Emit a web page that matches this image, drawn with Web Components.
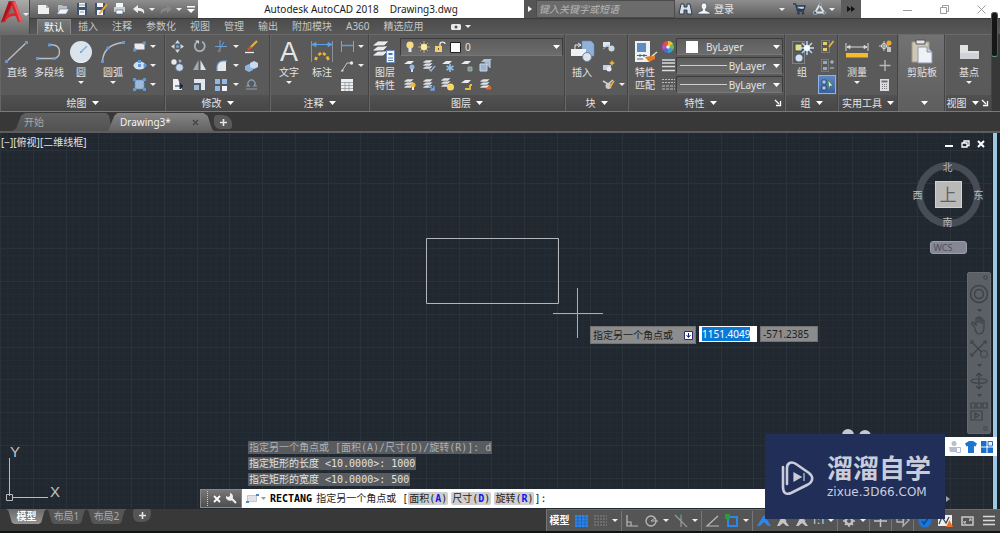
<!DOCTYPE html>
<html lang="zh-CN">
<head>
<meta charset="utf-8">
<title>Autodesk AutoCAD 2018 Drawing3.dwg</title>
<style>
html,body{margin:0;height:100%}
body{background:#0c1416;color:#e4e4e4;font:10px/13px "Noto Sans","Noto Sans CJK SC",sans-serif}
</style>
</head>
<body>
<cad-app></cad-app>
<script>
/* name: [width, height, svg markup] */
const pt=(x,y)=>`<rect x="${x-1.5}" y="${y-1.5}" width="3" height="3" fill="#5f9ad6"/>`;
const stack=(x,y,c='#dfe3e8')=>[6,3,0].map(d=>`<path d="M${x} ${y+d+2}l3-2h7l-3 3h-7z" fill="${c}" stroke="#555" stroke-width=".5"/>`).join('');
const ICONS={
caret:[7,4,'<path d="M0 0h7L3.500 4z" fill="#fff"/>'],
caretS:[6,3,'<path d="M0 0h6L3 3z" fill="#eee"/>'],
right:[4,6,'<path d="M0 0v6l4-3z" fill="#fff"/>'],
launch:[6,6,'<path d="M0 0l4 4M5.500 1v4.500H1" stroke="#fff" stroke-width="1.300" fill="none"/>'],
logo:[22,22,'<path d="M8 0h6l7.500 20-4.500 1-2-5.500c-3-1-6 0-9 2.500L4 21l-4 .5z" fill="#d9252b"/><path d="M10.800 5l3 7.500c-2.500-.5-4.500.3-6.200 1.200z" fill="#777"/><path d="M8 0l-8 21.500 3-2L11 2z" fill="#a3161c"/><path d="M14 0l7.500 20-2.500.500L12 1z" fill="#f0575b"/>'],
neu:[13,11,'<path d="M1 1h8l3 3v6H1z" fill="#eef0f2"/><path d="M9 1v3h3" fill="#a8adb3"/>'],
open:[13,11,'<path d="M2 1h4l1 1h4v3H4L2 9z" fill="#b7bec7"/><path d="M4 5h9l-3 5H1z" fill="#f1f3f6" stroke="#6d7f96" stroke-width=".6"/>'],
save:[12,12,'<path d="M1 0h10v12H1z" fill="#3d5370"/><path d="M3 0h6v4H3zM3 7h6v5H3z" fill="#f2f4f6"/><path d="M3 2h6M4 9h4" stroke="#8997a8"/>'],
saveas:[13,12,'<path d="M1 0h10v12H1z" fill="#3d5370"/><path d="M3 0h6v4H3zM3 7h6v5H3z" fill="#f2f4f6"/><path d="M12.500 1L6 9l-1 2 2-1 6-8z" fill="#f3a63b" stroke="#f3a63b" stroke-width=".8"/>'],
print:[13,12,'<path d="M3 0h7v4H3z" fill="#f4f6f8"/><path d="M1 4h11v5H1z" fill="#c9d0d8"/><path d="M3 7h7v4H3z" fill="#fff" stroke="#4e6078" stroke-width=".7"/>'],
undo:[12,9,'<path d="M0 4l5-4v3c5-.2 7 2 6 6C10 6.500 8 5.600 5 5.700V8z" fill="#eceef0"/>'],
redo:[12,9,'<path d="M12 4L7 0v3C2 2.800 0 5 1 9c1-2.500 3-3.400 6-3.300V8z" fill="#85888b"/>'],
menu:[8,7,'<path d="M0 0h8v1.500H0zM0 3h8L4 7z" fill="#fff"/>'],
bino:[13,12,'<path d="M2 1h3v3h3V1h3l2 10H8V7H5v4H0z" fill="#d9e2ec" stroke="#2d3b50" stroke-width="1"/>'],
user:[12,12,'<path d="M6 0c2 0 3 1.500 2.700 3.500C8.500 5 8 5.500 7.500 6v1.500L12 9.500V11H0V9.500l4.500-2V6C4 5.500 3.500 5 3.300 3.500 3 1.500 4 0 6 0z" fill="#f2f5f8" stroke="#3d4a5c" stroke-width=".6"/>'],
cart:[13,12,'<path d="M0 1h2.500l2 7H11M3.500 3H12L11 6.500H4.500" fill="#cfd8e3" stroke="#2a3b55" stroke-width="1.400"/><circle cx="5.500" cy="10.300" r="1.300" fill="#2a3b55"/><circle cx="10" cy="10.300" r="1.300" fill="#2a3b55"/>'],
tri:[13,12,'<path d="M6.500 2L2 9.500h9z" fill="none" stroke="#dfe7ef" stroke-width="1.800"/><path d="M6.500 0a1.800 1.800 0 010 3.600M0 9l3-1 1 3-3 .5zM10 8l3 1.500-2 2z" fill="#3f5b7f" stroke="#dfe7ef" stroke-width=".5"/>'],
more:[8,6,'<path d="M0 0l4 3-4 3zM4 0l4 3-4 3z" fill="#111"/>'],
min:[9,9,'<path d="M0 5.500h9" stroke="#9b9b9b"/>'],
rest:[9,9,'<path d="M.5 2.500h6v6h-6zM2.500 2.500v-2h6v6h-2" fill="none" stroke="#9b9b9b"/>'],
close:[9,9,'<path d="M.5.500l8 8M8.500.500l-8 8" stroke="#9b9b9b"/>'],
camera:[10,6,'<rect width="10" height="6" rx="1.500" fill="#e8e8e8"/><circle cx="5" cy="3" r="1.500" fill="#555"/>'],
line:[26,24,'<path d="M2.500 21.500l20-19" stroke="#b9bec3" stroke-width="1.400"/>'+pt(2.5,21.5)+pt(22.5,2.5)],
pline:[26,24,'<path d="M1.500 18.500H18c8-2 7-13-1-13.500l-3-.500" stroke="#b9bec3" stroke-width="1.400" fill="none"/>'+pt(1.5,18.5)+pt(18,18.5)+pt(13.500,5)],
circle:[26,24,'<circle cx="13" cy="12" r="11" fill="#dbe3ed"/><path d="M4 18a11 11 0 0018 0 12 12 0 01-18 0z" fill="#fff"/><path d="M13 12l6-6" stroke="#7fa9d8" stroke-width="1.300"/><rect x="12" y="11" width="2" height="2" fill="#7fa9d8"/>'],
arc:[26,24,'<path d="M2.500 21.500C3 10 10 4 23.500 2.500" stroke="#b9bec3" stroke-width="1.400" fill="none"/>'+pt(2.5,21.5)+pt(8,8)+pt(23.5,2.5)],
rect:[13,11,'<path d="M1.500 2.500h10v6h-10z" fill="#e9ebee"/>'+pt(1.8,9)+pt(11.3,2)],
ellipse:[13,11,'<ellipse cx="6.500" cy="5.500" rx="6" ry="4" fill="#d4dfec"/>'+pt(6.5,5.5)+pt(6.5,1.5)+pt(12,5.5)],
hatch:[13,13,'<path d="M2 2h9v9H2z" fill="#9db8d8" stroke="#5f8fc6" stroke-dasharray="2 1"/>'+pt(1.5,1.5)+pt(11.5,1.5)+pt(1.5,11.5)+pt(11.5,11.5)],
move:[13,13,'<path d="M6.500 0l2.500 3.500H4zM6.500 13L4 9.500h5zM0 6.500L3.500 4v5zM13 6.500L9.500 9V4z" fill="#cdd8e5"/><circle cx="6.500" cy="6.500" r="1.600" fill="#6aa0dc"/>'],
rotate:[13,13,'<path d="M4 2a5 5 0 105-.3" stroke="#a9afb6" stroke-width="1.800" fill="none"/><path d="M2 .500h4v3.500z" fill="#cdd3da"/>'],
trim:[13,13,'<path d="M0 6.500h12M5 0v6M3 12L9 2" stroke="#6d9fd4" fill="none"/><path d="M5 7v5" stroke="#888"/>'],
erase:[14,14,'<path d="M13 1L6 8" stroke="#e8b23c" stroke-width="2.200"/><path d="M7 7L4 10" stroke="#d54d34" stroke-width="2.600"/><path d="M1 12.500h9" stroke="#eee" stroke-width="1.300"/>'],
copy:[13,13,'<circle cx="3" cy="3" r="2.700" fill="#e5e9ee"/><circle cx="8.500" cy="8.500" r="3.800" fill="#c8d6e6" stroke="#48688f" stroke-width=".6"/><circle cx="9" cy="2" r="1.500" fill="#8fb3dc"/>'],
mirror:[13,13,'<path d="M5.500 1v10H0z" fill="#a3a9b0"/><path d="M7.500 1v10H13z" fill="#d8e2ee"/>'],
fillet:[13,13,'<path d="M2 12V8a6 6 0 016-6h3v10z" fill="#e3e8ee"/><path d="M2 12V8a6 6 0 016-6h4" stroke="#6e9fd3" stroke-width="1.200" fill="none"/>'],
solid:[14,12,'<path d="M1 6l4-2 4 2v4l-4 2-4-2z" fill="#8db4e0"/><path d="M6 3l4-2 4 2v4l-4 2-4-2z" fill="#c6daf0"/>'],
stretch:[13,13,'<path d="M2 1h5l4 11H2z" fill="#eef1f5"/><path d="M4 8h5M9 5l3 3-3 3z" stroke="#1c2c42" fill="#1c2c42"/>'],
scale:[13,13,'<path d="M1 1h11v11H8V5H1z" fill="#dfe7f0"/><path d="M1 7h5v5H1z" fill="#9bbce2"/>'],
array:[13,13,'<path d="M0 1h5v5H0zM7 1h5v5H7zM0 8h5v5H0z" fill="#8fb8e8"/><path d="M7 8h5v5H7z" fill="#eef3f9"/>'],
offset:[13,11,'<path d="M1 10h11M1 7h3a3.500 3.500 0 115 0h3" stroke="#8fa3ba" stroke-width="1.200" fill="none"/>'],
text:[26,26,'<text x="13" y="22" text-anchor="middle" font-family="Liberation Sans,sans-serif" font-size="27" fill="#e3e5e8">A</text>'],
dim:[24,24,'<path d="M1.500 1v21M22.500 1v21" stroke="#8d9299"/><path d="M2 4.500h20M2 4.500l4-2v4zM22 4.500l-4-2v4z" stroke="#5aa0e6" fill="#5aa0e6"/><path d="M5.500 20l1-3M8.500 15l2.500-2M13 13l2.500 2M17 16.500l1.500 3.500" stroke="#efb52e" stroke-width="2.800" fill="none"/>'],
dimS:[13,11,'<path d="M.5 0v11M12.500 0v11" stroke="#9a9fa6"/><path d="M1 4.500h11" stroke="#5aa0e6" stroke-width="1.400"/>'],
leader:[13,12,'<path d="M1 11L6 3h3" stroke="#c1c6cc" fill="none"/><circle cx="10.500" cy="3" r="1.700" fill="#e4e7eb"/><path d="M0 12l3-1-2-2z" fill="#ddd"/>'],
table:[12,12,'<path d="M0 0h12v12H0z" fill="#eceef0"/><path d="M0 3.500h12M0 6.500h12M0 9.500h12M4 3v9M8 3v9" stroke="#9199a2" stroke-width=".8"/>'],
layers:[26,24,'<path d="M1 15l5-4h10l-5 5H1zM1 10l5-4h10l-5 5H1zM1 5l5-4h11l-5 5H1z" fill="#e8eaed" stroke="#4d4d4d" stroke-width=".7"/><path d="M14.500 10.500h8v12h-8z" fill="#f3f6fa" stroke="#6d8db5"/><path d="M16.500 13h4v2h-4z" fill="#3f79bf"/><path d="M16 18h5M16 20.500h5" stroke="#69809c"/>'],
bulb:[8,12,'<circle cx="4" cy="4" r="3.600" fill="#f7dc84"/><path d="M2.500 7h3v4h-3z" fill="#e3e4e6"/>'],
sun:[12,12,'<path d="M6 0v12M0 6h12M2 2l8 8M10 2l-8 8" stroke="#d8b968" stroke-width=".8"/><circle cx="6" cy="6" r="3.200" fill="#fbeba6"/>'],
lock:[12,12,'<path d="M6 5V3c0-2.500 5-2.500 5 0" stroke="#eee" fill="none" stroke-width="1.300"/><path d="M1 5h7v6H1z" fill="#f2cf6b"/><path d="M4 7h1v2H4z" fill="#555"/>'],
white:[11,11,'<path d="M.5.500h10v10H.5z" fill="#fff" stroke="#222"/>'],
swatch:[12,12,'<path d="M0 0h12v12H0z" fill="#fff"/>'],
l1:[13,12,'<path d="M1 4l4-3h6L8 4z" fill="#e8eaed"/><circle cx="9" cy="7" r="2.500" fill="#8fb8ea"/><path d="M8 9h2v3H8z" fill="#ddd"/>'],
l2:[13,13,stack(1,1)+'<path d="M7 10l2 2 4-5" stroke="#8bb4e4" fill="none" stroke-width="1.500"/>'],
l3:[13,12,'<path d="M1 4l4-3h6L8 4z" fill="#e8eaed"/><path d="M9 4v8M5.500 6l7 4M12.500 6l-7 4" stroke="#8fbdf0" stroke-width="1.600"/>'],
l4:[13,12,'<path d="M1 4l4-3h6L8 4z" fill="#e8eaed"/><path d="M8 7h4v4H8z" fill="#7f969c" stroke="#a8c9b3" stroke-width=".7"/>'],
l5:[13,13,'<path d="M1 5h7v7H1zM4 2h7v7" fill="#9fb4cc" stroke="#c5d8ec"/><path d="M2 3l3-3h8l-3 3z" fill="#a9c4e0"/>'],
l6:[13,13,stack(1,1)+'<circle cx="10" cy="7" r="2.500" fill="#f2bb3b"/><path d="M9 9h2v3H9z" fill="#eee"/>'],
l7:[13,13,stack(1,1)+'<path d="M7 8l5 4M12 8v4H8" stroke="#6fa2e0" fill="none" stroke-width="1.500"/>'],
l8:[13,13,stack(0,0)+'<circle cx="9.500" cy="9" r="3.500" fill="#f6d766"/>'],
l9:[13,12,'<path d="M1 4l4-3h6L8 4z" fill="#e8eaed"/><path d="M10 6v4H5M10 6h2" stroke="#eebd37" stroke-width="1.800" fill="none"/>'],
l10:[13,13,stack(1,1)+'<path d="M7 11l4-3 1 3z" fill="#e06a2e" stroke="#e06a2e"/>'],
insert:[25,24,'<path d="M12 1h9l3 3v12H12z" fill="#8fb1da" stroke="#6d8db5" stroke-width=".6"/><path d="M5 10V5h6M8 3l3 2-3 2" stroke="#e7e9ec" fill="none"/><path d="M1 9h15v7H1z" fill="#edf0f4"/><circle cx="17" cy="17" r="4.500" fill="#dbe3ec" stroke="#6e7f94"/>'],
b1:[13,11,'<path d="M1 1h7v5H1z" fill="#e1e6ec"/><path d="M1 8l4-3h3" stroke="#8fb1da" fill="none"/><circle cx="9.500" cy="7.500" r="3" fill="#cfd5dc"/>'],
b2:[13,12,'<path d="M1 5h8v5H1z" fill="#c1cfdf"/><circle cx="7" cy="9" r="2.500" fill="#e7ebf0"/><path d="M10 0l1 2 2 1-2 1-1 2-1-2-2-1 2-1z" fill="#f4b135"/>'],
b3:[13,11,'<path d="M1 2l5 3 5-4" stroke="#ccc" stroke-width="1.600" fill="none"/><circle cx="6.500" cy="7" r="3" fill="#c7ccd2"/><path d="M12 2L8 8" stroke="#e8a530" stroke-width="1.800"/>'],
match:[25,24,'<path d="M2 1h15v21H2z" fill="#eff2f5"/><path d="M4 3h9v9H4z" fill="#5b8dc4"/><path d="M4 15.500h10M4 19h6M7 14v3M11 14v3" stroke="#53657c"/><path d="M22 14l-4 2-6 1 4 5 6-3z" fill="#df7a27"/><path d="M19 16l5-4" stroke="#ddd" stroke-width="1.500"/>'],
wheel:[12,12,'<path d="M6 6V0a6 6 0 015.200 3z" fill="#f2c232"/><path d="M6 6l5.200-3a6 6 0 010 6z" fill="#6cc04a"/><path d="M6 6l5.200 3A6 6 0 016 12z" fill="#35a0d8"/><path d="M6 6v6a6 6 0 01-5.200-3z" fill="#5a63d6"/><path d="M6 6L.8 9a6 6 0 010-6z" fill="#c04ac0"/><path d="M6 6L.8 3A6 6 0 016 0z" fill="#e64f3c"/><circle cx="6" cy="6" r="1.800" fill="#eee"/>'],
lw:[13,13,'<path d="M0 1h13M0 4h13M0 7.500h13M0 11.500h13" stroke="#d9dcdf" stroke-width="1.600"/>'],
lt:[13,13,'<path d="M0 1.500h13M0 4.500h13" stroke="#b9bcc0" stroke-dasharray="2 1"/><path d="M0 8h13M0 11h13" stroke="#b9bcc0" stroke-dasharray="3 1"/>'],
group:[25,24,'<path d="M2.500 1.500h12v22h-12z" fill="none" stroke="#aaa" stroke-dasharray="1 1"/><path d="M5 4h7v7H5z" fill="#dfe08a" stroke="#444"/><circle cx="9" cy="18" r="3.500" fill="#cfe4f8"/><path d="M17 1v14M10 8h14M12 3l10 10M22 3L12 13" stroke="#b9e0ff" stroke-width="1.400"/><circle cx="17" cy="8" r="3" fill="#fff"/>'],
g1:[13,13,'<path d="M.5.500h8v12h-8z" fill="none" stroke="#999" stroke-dasharray="1 1"/><path d="M2 2h4v3H2zM2 8h4v3H2z" fill="#e3cf6f"/><path d="M12.500 1L8 7" stroke="#f0b53a" stroke-width="1.500"/>'],
g2:[13,13,'<path d="M.5.500h7v12h-7z" fill="none" stroke="#999" stroke-dasharray="1 1"/><path d="M2 2h4v3H2zM2 8h4v3H2z" fill="#93a9c4"/><path d="M9 3h4M11 1v4M9 9h4" stroke="#b8c6d8"/>'],
g3:[13,13,'<path d="M1 2h4v4H1zM1 8h4v4H1z" fill="#a9c8ee" stroke="#1d3252" stroke-width=".7"/><path d="M7 2l5 6H9l-1 4z" fill="#d9efc8" stroke="#3d6b3b" stroke-width=".6"/>'],
measure:[24,20,'<path d="M1 1v8M23 1v8M2 5h20M2 5l3-1.500v3zM22 5l-3-1.500v3z" stroke="#d5d7da" fill="#d5d7da"/><path d="M1 11h22v4.500H1z" fill="#f3bb2d"/>'],
u1:[13,13,'<path d="M5 1v10M0 6h10" stroke="#ccc"/><circle cx="5" cy="6" r="2.500" fill="none" stroke="#ddd"/><circle cx="10" cy="3" r="2.500" fill="#efa62c"/><path d="M8 7h4v5H8z" fill="#bfc3c8"/>'],
u2:[13,13,'<path d="M6 1v11M.5 6.500h11" stroke="#b4b8bd" stroke-width="1.400"/>'],
calc:[10,12,'<path d="M0 0h9v12H0z" fill="#dadcdf"/><path d="M1.500 1.500h6v2h-6z" fill="#6d7278"/><path d="M2 5.500h6M2 7.500h6M2 9.500h6" stroke="#777" stroke-dasharray="1 1"/>'],
paste:[22,25,'<path d="M1 3h17v20H1z" fill="#cfc6b8" stroke="#a39a8b"/><path d="M5 1h9v4H5z" fill="#e8e8e8" stroke="#555"/><path d="M7 8h9l5 5v11H7z" fill="#eef2f7" stroke="#8e99a8"/><path d="M16 8v5h5" fill="#c2ccd8" stroke="#8e99a8"/>'],
base:[21,16,'<path d="M1 1h8v6h11v8H1z" fill="#e0e2e4"/><path d="M1 9h19v6H1z" fill="#d0d2d5"/>'],
vmin:[9,8,'<path d="M0 6h8" stroke="#fff" stroke-width="2"/>'],
vrest:[9,8,'<path d="M1 3h5v4H1zM3 3V1h5v4.500H6" fill="none" stroke="#fff" stroke-width="1.300"/>'],
vclose:[8,8,'<path d="M1 1l6 6M7 1L1 7" stroke="#fff" stroke-width="2"/>'],
tabx:[7,7,'<path d="M1 1l5 5M6 1L1 6" stroke="#444" stroke-width="1.200"/>'],
plus:[7,7,'<path d="M3.500 0v7M0 3.500h7" stroke="#e6e6e6" stroke-width="1.600"/>'],
downbox:[9,9,'<path d="M.5.500h8v8h-8z" fill="#fff" stroke="#2a2a7d"/><path d="M4.500 2v4M2.500 4l2 2.500 2-2.500" stroke="#22226e" fill="none"/>'],
grip:[3,15,'<path d="M1.500 0v15" stroke="#ccc" stroke-dasharray="1 1"/>'],
cx:[8,8,'<path d="M1 1l6 6M7 1L1 7" stroke="#fff" stroke-width="1.800"/>'],
wrench:[11,11,'<path d="M1 4a3 3 0 005 2l4 4" stroke="#eee" stroke-width="2" fill="none"/><path d="M4 0v3L2 4 0 3a3.500 3.500 0 007 1 4 4 0 00-3-4z" fill="#eee"/>'],
crect:[13,11,'<path d="M1.500 2.500h9v6h-9z" fill="#dfe2e6" stroke="#c3c7cc"/><path d="M0 8h3v2H0zM10 1h3v2h-3z" fill="#4f83c9"/>'],
dcaret:[5,3,'<path d="M0 0h5L2.500 3z" fill="#999"/>'],
histup:[4,6,'<path d="M0 0v6l4-3z" fill="#9aa0a5"/>'],
/* navigation bar */
nwheel:[20,20,'<circle cx="10" cy="10" r="8.500" fill="none" stroke="#3c4247" stroke-width="1.400"/><circle cx="10" cy="10" r="4.500" fill="none" stroke="#3c4247" stroke-width="1.400"/>'],
nhand:[18,19,'<path d="M5 12L2 8c-1-2 1-2.500 2-1l2 2V3c0-1.500 2-1.500 2 0v4-5c0-1.500 2-1.500 2 0v5-4c0-1.500 2-1.500 2 0v5-3c0-1.500 2-1.500 2 0v6c0 5-2 7-5 7-2 0-3-2-4-5z" fill="none" stroke="#3c4247" stroke-width="1.200"/>'],
nzoom:[19,20,'<path d="M2 2l13 14M15 2L2 15M1 4V1h3M13 1h3v3M1 13v3h3" stroke="#3c4247" stroke-width="1.200" fill="none"/><circle cx="14" cy="14" r="3.500" fill="#5a6065" stroke="#3c4247"/>'],
norbit:[18,18,'<path d="M9 1v16M6 4l3-3 3 3M6 14l3 3 3-3M1 9c0-3 16-3 16 0s-16 3-16 0" stroke="#3c4247" stroke-width="1.200" fill="none"/>'],
nmotion:[19,20,'<path d="M1 1h4v5H1zM7 1h4v5H7zM13 1h4v5h-4zM1 9h11v9H1zM5 11v5l4-2.500z" stroke="#3c4247" stroke-width="1.200" fill="none"/>'],
ndot:[5,5,'<circle cx="2.500" cy="2.500" r="1.800" fill="none" stroke="#3c4247"/>'],
ncaret:[5,3,'<path d="M0 0h5L2.500 3z" fill="#3c4247"/>'],
/* input-method bar */
person:[12,12,'<circle cx="5" cy="2.500" r="2.500" fill="#b5bdd0"/><path d="M0 6h8v5H1z" fill="#b5bdd0"/><path d="M7.500 6.500h4v5h-4z" fill="#fff" stroke="#b5bdd0"/>'],
shirt:[12,12,'<path d="M4 0h4l4 2.500-1.500 3-1.500-.5V12H3V5l-1.500.5L0 2.500z" fill="#1b76d0"/>'],
apps:[12,12,'<path d="M0 0h5.500v5.500H0zM0 6.500h5.500V12H0zM6.500 6.500H12V12H6.500z" fill="#1b6fc8"/><path d="M7 .500h4.500V5H7z" fill="#e8f0fa" stroke="#1b6fc8"/>'],
/* status bar */
sgrid:[13,12,'<path d="M0 0h13v12H0z" fill="#2f86ea"/><path d="M0 3h13M0 6h13M0 9h13M3 0v12M6.500 0v12M10 0v12" stroke="#1c5cae" stroke-width=".7"/>'],
ssnap:[13,12,'<path d="M0 1h13M0 4h13M0 7h13M0 10h13" stroke="#85888b" stroke-dasharray="2 1"/>'],
sortho:[13,12,'<path d="M1 0v11h11M1 7h4v4" stroke="#b9b9b9" fill="none" stroke-width="1.200"/>'],
spolar:[13,12,'<circle cx="6" cy="6" r="5" stroke="#b9b9b9" fill="none" stroke-width="1.300"/><path d="M6 6h7M6 6l4-3" stroke="#b9b9b9"/>'],
siso:[14,14,'<path d="M1 1l12 12M7 1v12" stroke="#999" stroke-width="1.200"/><path d="M7 0v4" stroke="#3b8d5a"/>'],
sang:[13,12,'<path d="M12 1L1 11h12" stroke="#b9b9b9" fill="none" stroke-width="1.200"/>'],
sosnap:[14,14,'<path d="M3 3h9v9H3z" fill="none" stroke="#2f86ea" stroke-width="2"/><path d="M0 0h5v5H0z" fill="#21a038"/>'],
sman:[14,12,'<path d="M7 0L0 11h3l4-4 4 4h3z" fill="#2f86ea"/>'],
sman2:[14,12,'<path d="M6 1L1 11h2.500L7 8l3.500 3H13z" fill="#c4c4c4"/><path d="M10 1l-2 4h2l-1 3" stroke="#c4c4c4" fill="none"/>'],
sgear:[12,12,'<circle cx="6" cy="6" r="3.500" stroke="#c4c4c4" stroke-width="2" fill="none"/><path d="M6 0v12M0 6h12M2 2l8 8M10 2l-8 8" stroke="#c4c4c4" stroke-width="1.500"/><circle cx="6" cy="6" r="2" fill="#555"/>'],
splus:[13,12,'<path d="M6.500 0v12M0 6h13" stroke="#c4c4c4" stroke-width="1.500"/>'],
siso2:[14,12,'<path d="M1 2h6v5H1zM8 1l5 4-6 6z" stroke="#b4b4b4" fill="none" stroke-width="1.300"/>'],
scirc:[14,14,'<circle cx="7" cy="7" r="6.500" fill="#1b77dd"/><path d="M4 7l2 3 4-6" stroke="#0d4b97" fill="none" stroke-width="1.600"/>'],
schart:[15,14,'<path d="M0 1h14v11H0z" fill="#eee"/><path d="M1 10l3-7 4 6 3-6" stroke="#444" fill="none" stroke-width="1.300"/><path d="M11.500 6l3.500 7H8z" fill="#e8702a"/>'],
sclean:[13,10,'<path d="M1 1h11v8H1z" fill="none" stroke="#c9c9c9" stroke-width="1.500"/><path d="M3 7l2-2M10 3L8 5M3 5v2h2M8 3h2v2" stroke="#c9c9c9" fill="none"/>'],
sburger:[12,11,'<path d="M0 1.500h12M0 5.500h12M0 9.500h12" stroke="#d9d9d9" stroke-width="1.700"/>'],
brand:[35,36,'<path d="M3 8v20c0 6 3 8 8 6l16-8c6-3 7-8 2-12L16 5C11 2 7 4 7 9v16" fill="none" stroke="#c9cddb" stroke-width="2.600" stroke-linecap="round"/><path d="M14 14v8l7-4zM24 14v8" fill="#c9cddb" stroke="#c9cddb" stroke-width="1.200"/>']
};

const BASE=`*{box-sizing:border-box}button{all:unset;box-sizing:border-box;cursor:default;display:inline-flex;align-items:center;justify-content:center}`;
function define(tag,css,html){
  customElements.define(tag,class extends HTMLElement{
    connectedCallback(){
      if(this.shadowRoot)return;
      const t=document.createElement('template');
      t.innerHTML=`<style>${BASE}${css}</style>${typeof html==='function'?html(this):html}`;
      this.attachShadow({mode:'open'}).append(t.content.cloneNode(true));
    }
  });
}
const ic=n=>`<cad-icon name="${n}"></cad-icon>`;
const btn=(n,label,cls='')=>`<button class="${cls}" aria-label="${label}">${ic(n)}</button>`;

define('cad-icon',':host{display:block;flex:none}svg{display:block;overflow:visible}',el=>{
  const [w,h,m]=ICONS[el.getAttribute('name')];
  return `<svg width="${w}" height="${h}" viewBox="0 0 ${w} ${h}" aria-hidden="true">${m}</svg>`;
});

/* large ribbon command: icon above its caption */
define('cad-tool',`:host{display:block;flex:none;width:32px}
button{width:100%;flex-direction:column;justify-content:flex-start}
.i{height:29px;display:flex;align-items:center}
.l{text-align:center;white-space:pre-line}
.c{height:7px;display:flex;align-items:center}`,
el=>`<button><span class="i">${ic(el.getAttribute('icon'))}</span><span class="l"><slot></slot></span>${el.hasAttribute('drop')?`<span class="c">${ic('caretS')}</span>`:''}</button>`);

/* small ribbon command, optionally with a drop-down arrow */
define('cad-mini',`:host{display:flex;height:19px}
button{width:100%;height:19px}
.m{width:var(--mini,20px);height:19px;flex:none}.d{width:8px;flex:none}
:host([active]) .m{background:linear-gradient(#5c86c4,#3c62a0);border:1px solid #8fb2e6}`,
el=>btn(el.getAttribute('icon'),el.getAttribute('label'),'m')+(el.hasAttribute('drop')?btn('caretS',el.getAttribute('label')+' 选项','d'):''));

define('cad-panel',`:host{display:flex;flex-direction:column;min-width:0;border:1px solid #454545;border-top-color:#6a6a6a;border-left-color:#666;border-bottom:0;background:#5a5a5a}
.b{flex:1;display:flex;padding-top:2px;min-height:60px}
.f{height:16px;display:flex;align-items:center;background:linear-gradient(#515151,#474747)}
.f .t{flex:1;gap:5px;height:16px}
:host([lit]){background:linear-gradient(#727272,#5e5e5e)}
:host([lit]) .f{background:none}
.x{width:12px;height:16px}`,
el=>`<div class="b"><slot></slot></div><div class="f"><button class="t" aria-label="${el.getAttribute('label')||'剪贴板'}"><span>${el.getAttribute('label')||''}</span>${ic('caret')}</button>${el.hasAttribute('launch')?btn('launch','设置','x'):''}</div>`);

define('cad-combo',`:host{display:flex;align-items:center;height:18px;position:relative;background:linear-gradient(#5d5d5d,#6c6c6c);border:1px solid #3c3c3c;border-bottom-color:#777;min-width:0}
select{all:unset;flex:1;min-width:0;box-sizing:border-box;font:inherit;line-height:16px;height:16px}
:host([right]) select{text-align:right;padding-right:16px}
option{color:#000}
.c{position:absolute;right:2px;top:6px;pointer-events:none}
.r{flex:1;height:1px;background:#cfcfcf;margin:0 1px 0 3px}
:host([right]) select{flex:none}`,
el=>`<slot></slot>${el.hasAttribute('right')?'<i class="r"></i>':''}<select aria-label="${el.getAttribute('label')}"><option>${el.getAttribute('value')}</option></select><span class="c">${ic('caret')}</span>`);

define('cad-titlebar',`:host{display:flex;height:18px;background:#fff;min-width:0}
.q,.s{display:flex;flex:none;background:linear-gradient(#8e8e8e,#5c5c5c);height:18px}
.q{padding-left:4px}
.k{width:19px}.c{width:8px}.n{width:15px}
h1{flex:1;margin:0;font:10px/18px "Noto Sans","Noto Sans CJK SC",sans-serif;color:#1c1c1c;display:flex;justify-content:center;gap:11px;white-space:nowrap;min-width:0}
.s{width:337px}.a{width:12px;background:#555}
input{width:139px;height:18px;border:1px solid #4c4c4c;background:#6b6b6b;color:#fff;padding:0 2px;font:italic 10px/13px "Noto Sans","Noto Sans CJK SC",sans-serif;outline:0;border-radius:0}
input::placeholder{color:#b5b5b5}
.b{width:20px}.u{gap:4px;padding-left:3px}
.g{flex:1}.v{width:12px}.w{width:22px}.y{width:18px}.m{width:20px;margin-left:5px;background:#5d5d5d}
.o{flex:none;display:flex;width:139px;justify-content:flex-end}.o button{width:37px}`,
`<div class="q">${btn('neu','新建','k')}${btn('open','打开','k')}${btn('save','保存','k')}${btn('saveas','另存为','k')}${btn('print','打印','k')}${btn('undo','放弃','k')}${btn('caretS','放弃列表','c')}${btn('redo','重做','k')}${btn('caretS','重做列表','c')}${btn('menu','自定义快速访问工具栏','n')}</div>
<h1><span>Autodesk AutoCAD 2018</span><span>Drawing3.dwg</span></h1>
<div class="s">${btn('right','展开搜索','a')}<input placeholder="键入关键字或短语" aria-label="搜索">${btn('bino','搜索帮助','b')}<button class="u">${ic('user')}登录</button><span class="g"></span>${btn('caretS','登录选项','v')}${btn('cart','应用商店','w')}${btn('tri','保持连接','y')}${btn('caretS','连接选项','c')}${btn('more','更多','m')}</div>
<div class="o">${btn('min','最小化')}${btn('rest','还原')}${btn('close','关闭')}</div>`);

define('cad-menubar',`:host{display:flex;height:16px;background:linear-gradient(#4c4c4c,#585858);padding-left:7px;border-top:1px solid #3c3c3c}
button{padding:0 7px;height:15px;color:#c6c6c6;line-height:15px}
.on{background:linear-gradient(#787878,#646464);color:#fff;border:1px solid #858585;border-bottom:0;padding:0 6px}
.cam{gap:4px;margin-left:13px}`,
['默认','插入','注释','参数化','视图','管理','输出','附加模块','A360','精选应用'].map((t,i)=>`<button${i?'':' class="on"'}>${t}</button>`).join('')+`<button class="cam" aria-label="显示选项">${ic('camera')}${ic('caretS')}</button>`);

const mini=(i,l,d='')=>`<cad-mini icon="${i}" label="${l}" ${d}></cad-mini>`;
define('cad-ribbon',`:host{display:grid;grid-template-columns:165fr 105fr 99fr 196fr 63fr 157fr 53fr 60fr 47fr 47fr 8fr;height:78px;background:#383838;border-bottom:1px solid #7a7a7a}
.col{flex:none}
.w36{width:36px}.w30{width:30px}.w46{width:46px}
.mod{display:grid;grid-template-columns:22px 22px 30px 30px;grid-auto-rows:19px;--mini:22px}
.lay,.prop{flex:1;min-width:0;padding-right:1px}
.prop{display:grid;grid-auto-rows:17px;row-gap:2px;margin-left:1px}
.prop cad-combo{height:17px}
.lay cad-combo{margin-top:1px;padding-left:5px;gap:4px}
.grid{display:grid;grid-template-columns:repeat(5,19px);--mini:19px}
.sw{margin:0 8px 0 9px}
.prop{margin-top:1px}`,
`<cad-panel label="绘图"><cad-tool icon="line">直线</cad-tool><cad-tool icon="pline">多段线</cad-tool><cad-tool icon="circle" drop>圆</cad-tool><cad-tool icon="arc" drop>圆弧</cad-tool><div class="col">${mini('rect','矩形','drop')}${mini('ellipse','椭圆','drop')}${mini('hatch','图案填充','drop')}</div></cad-panel>
<cad-panel label="修改"><div class="mod">${mini('move','移动')}${mini('rotate','旋转')}${mini('trim','修剪','drop')}${mini('erase','删除')}${mini('copy','复制')}${mini('mirror','镜像')}${mini('fillet','圆角','drop')}${mini('solid','分解')}${mini('stretch','拉伸')}${mini('scale','缩放')}${mini('array','阵列','drop')}${mini('offset','偏移')}</div></cad-panel>
<cad-panel label="注释"><cad-tool class="w36" icon="text" drop>文字</cad-tool><cad-tool class="w30" icon="dim">标注</cad-tool><div class="col">${mini('dimS','线性','drop')}${mini('leader','引线','drop')}${mini('table','表格')}</div></cad-panel>
<cad-panel label="图层"><cad-tool class="w30" icon="layers">图层\n特性</cad-tool><div class="lay"><cad-combo label="图层" value="0">${ic('bulb')}${ic('sun')}${ic('lock')}${ic('white')}</cad-combo><div class="grid">${['关','隔离','冻结','锁定','置为当前','打开所有','取消隔离','解冻','解锁','匹配图层'].map((l,i)=>mini('l'+(i+1),l)).join('')}</div></div></cad-panel>
<cad-panel label="块"><cad-tool icon="insert">插入</cad-tool><div class="col">${mini('b1','创建块')}${mini('b2','编辑块')}${mini('b3','编辑属性','drop')}</div></cad-panel>
<cad-panel label="特性" launch><cad-tool icon="match">特性\n匹配</cad-tool><div class="col" style="--mini:14px">${mini('wheel','颜色')}${mini('lw','线宽')}${mini('lt','线型')}</div><div class="prop"><cad-combo label="对象颜色" value="ByLayer"><span class="sw">${ic('swatch')}</span></cad-combo><cad-combo right label="线宽" value="ByLayer"></cad-combo><cad-combo right label="线型" value="ByLayer"></cad-combo></div></cad-panel>
<cad-panel label="组"><cad-tool icon="group">组</cad-tool><div class="col" style="--mini:18px">${mini('g1','解除编组')}${mini('g2','组编辑')}${mini('g3','组选择','active')}</div></cad-panel>
<cad-panel label="实用工具"><cad-tool class="w36" icon="measure" drop>测量</cad-tool><div class="col">${mini('u1','快速选择')}${mini('u2','点样式')}${mini('calc','计算器')}</div></cad-panel>
<cad-panel lit><cad-tool class="w46" icon="paste">剪贴板</cad-tool></cad-panel>
<cad-panel label="视图" launch><cad-tool class="w46" icon="base" drop>基点</cad-tool></cad-panel>`);

define('cad-filetabs',`:host{display:flex;height:21px;background:#383838;border-bottom:2px solid #5d5d5d;padding-left:12px;align-items:flex-end}
.tab{height:18px;width:100px;color:#a9a9a9;background:linear-gradient(#606060,#525252);clip-path:polygon(0 100%,4% 88%,9% 15%,13% 0,94% 0,97% 15%,100% 100%);justify-content:flex-start;padding-left:12px}
.on{width:106px;margin-left:-4px;color:#f3f3f3;background:linear-gradient(#858585,#636363);clip-path:polygon(0 100%,6% 15%,9% 0,90% 0,94% 15%,98% 88%,100% 100%);justify-content:space-between;padding:0 15px 0 12px}
.add{width:18px;height:14px;margin:0 0 2px 0;background:#5a5a5a;border-radius:3px 9px 3px 6px}`,
`<button class="tab">开始</button><button class="tab on">Drawing3*${ic('tabx')}</button><button class="add" aria-label="新图形">${ic('plus')}</button>`);

define('cad-viewcube',`:host{display:block;width:72px}
.r{position:relative;width:65px;height:65px;margin:0 auto;border-radius:50%;border:7px solid #474d55}
button{position:absolute;font-size:10px;line-height:12px;color:#b9bcc0}
.n{left:20px;top:-8px}.s{left:20px;bottom:-8px}.w{left:-10px;top:20px}.e{right:-10px;top:20px}
.f{left:12px;top:12px;width:27px;height:27px;background:#b9bab8;border:1px solid #d2d2d0;color:#5f646a;font-size:17px;line-height:26px}
.wcs{position:static;display:flex;width:37px;height:13px;margin:14px auto 0;background:#858894;border:1px solid #9b9ea8;border-radius:3px;color:#4c505c;font-size:9px;justify-content:flex-start;padding-left:3px}`,
`<div class="r"><button class="f">上</button><button class="n">北</button><button class="s">南</button><button class="w">西</button><button class="e">东</button></div><button class="wcs">WCS</button>`);

define('cad-navbar',`:host{display:flex;flex-direction:column;align-items:center;justify-content:space-between;width:24px;height:162px;padding:2px 0;background:#5a6065;border:1px solid #666b70;border-radius:2px}
.h{align-self:flex-end;margin-right:2px}`,
`${btn('ndot','关闭','h')}${btn('nwheel','控制盘')}${ic('ncaret')}${btn('nhand','平移')}${btn('nzoom','缩放')}${ic('ncaret')}${btn('norbit','动态观察')}${ic('ncaret')}${btn('nmotion','ShowMotion')}${btn('ndot','选项','h')}`);

/* dynamic input beside the crosshair */
define('cad-prompt',`:host{display:flex;align-items:flex-start;gap:2px;color:#1e1e1e;white-space:nowrap}
.p,.v{background:#8c8c8c;border:1px solid #737373;display:flex;align-items:center}
.p{width:106px;height:18px;padding:0 2px;justify-content:space-between}
.v{height:16px;width:58px;padding:0 2px;margin-left:1px}
.a{background:#fff;border-color:#fff}
input{all:unset;field-sizing:content;font:10px/14px "Noto Sans",sans-serif}
.a input{background:#0a78d7;color:#fff}`,
`<div class="p"><span>指定另一个角点或</span>${ic('downbox')}</div><label class="v a"><input aria-label="X 坐标" value="1151.4049"></label><label class="v"><input aria-label="Y 坐标" value="-571.2385"></label>`);

define('cad-command',`:host{display:block;font:10px/13px "DejaVu Sans Mono","Noto Sans CJK SC",monospace;white-space:nowrap}
.h{margin:0 0 3px 48px;padding:0;list-style:none;display:flex;flex-direction:column;align-items:flex-start;gap:3px}
.h li{background:#585c60;color:#e2e2e2;padding:0 1px}
.h li:first-child{color:#aeb0b2}
.c{display:flex;height:19px;background:#fff;color:#222;align-items:center}
.g{display:flex;align-items:center;height:19px;width:42px;background:linear-gradient(#777,#4e4e4e);border:1px solid #888;justify-content:space-evenly}
.r{width:28px;height:19px;gap:2px}
p{margin:0;display:flex;align-items:center}
p b{color:#000;margin-right:4px}
.o{background:#cfcfcf;margin-right:3px;padding:0 1px;line-height:13px;border-radius:2px}.o:last-of-type{margin:0}
.o b{color:#1414e8;margin:0}
input{all:unset;flex:1;min-width:0;height:19px}
.u{width:5px;height:19px;background:#212830}`,
`<ul class="h"><li>指定另一个角点或 [面积(A)/尺寸(D)/旋转(R)]: d</li><li>指定矩形的长度 &lt;10.0000&gt;: 1000</li><li>指定矩形的宽度 &lt;10.0000&gt;: 500</li></ul>
<div class="c"><div class="g">${ic('grip')}${btn('cx','关闭')}${btn('wrench','自定义')}</div><button class="r" aria-label="最近命令">${ic('crect')}${ic('dcaret')}</button><p><b>RECTANG</b>指定另一个角点或&nbsp;[<button class="o">面积(<b>A</b>)</button><button class="o">尺寸(<b>D</b>)</button><button class="o">旋转(<b>R</b>)</button>]:</p><input aria-label="命令">${btn('histup','历史记录','u')}</div>`);

const lines=(s,f)=>Array.from({length:20},(_,i)=>Math.round(i*6.55)).filter((_,i)=>(i%5===0)===s).map(f).join('');
const gx=s=>lines(s,v=>`M${v+.5} 0v131`)+lines(s,v=>`M0 ${v+.5}h131`);
define('cad-canvas',`:host{display:block;flex:1;position:relative;min-height:376px;overflow:hidden;background:#212830}
.bg{position:absolute;inset:0;width:100%;height:100%}
.vp{position:absolute;left:1px;top:3px;font-size:10px;color:#e2e2e2;display:flex}
.wc{position:absolute;right:15px;top:7px;display:flex;gap:7px}
cad-viewcube{position:absolute;right:16px;top:29px}
cad-navbar{position:absolute;right:9px;top:139px}
cad-prompt{position:absolute;left:590px;top:193px}
cad-command{position:absolute;left:200px;right:50px;bottom:1px}
.ucs{position:absolute;left:4px;bottom:6px}
.edge{position:absolute;right:0;top:0;bottom:0;width:8px;background:#9cc8e4;border:solid #1b2026;border-width:0 3px 0 1px}
.bub{position:absolute;left:842px;bottom:66px}`,
`<svg class="bg" aria-hidden="true"><defs><pattern id="g" width="131" height="131" y="17" patternUnits="userSpaceOnUse"><path d="${gx(false)}" stroke="#232b34"/><path d="${gx(true)}" stroke="#2a333c"/></pattern></defs><rect width="100%" height="100%" fill="url(#g)"/><path d="M426.500 105.500h132v65h-132z" fill="none" stroke="#b3b6ba"/><path d="M553 180.500h50M577.500 155v50" stroke="#aaadb1"/></svg>
<div class="vp"><button>[−]</button><button>[俯视]</button><button>[二维线框]</button></div>
<div class="wc">${btn('vmin','最小化')}${btn('vrest','还原')}${btn('vclose','关闭')}</div>
<cad-viewcube></cad-viewcube><cad-navbar></cad-navbar>
<svg class="ucs" width="60" height="60" aria-hidden="true"><path d="M5.500 15v38M9 54.500h35M2.500 51.500h6v6h-6z" fill="none" stroke="#b9bcbf"/><g font-family="Liberation Sans,sans-serif" font-size="15" fill="#c2c4c7" text-anchor="middle"><text x="11" y="14">Y</text><text x="51" y="54">X</text></g></svg>
<svg class="bub" width="30" height="14" aria-hidden="true"><circle cx="6" cy="6" r="6" fill="#c5c9cc"/><circle cx="23" cy="7" r="6" fill="#c5c9cc"/></svg>
<cad-prompt></cad-prompt><cad-command></cad-command><div class="edge"></div>`);

define('cad-layouts',`:host{display:flex;align-items:flex-start;padding-left:6px}
button{height:15px;width:41px;margin-right:-1px;background:#555;color:#aaa;clip-path:polygon(0 0,100% 0,94% 12%,86% 90%,80% 100%,20% 100%,14% 90%,6% 12%)}
.on{background:linear-gradient(#6a6a6a,#949494);color:#fff;font-weight:700}
.add{width:18px;height:13px;margin-left:7px;clip-path:none;border-radius:2px 2px 8px 6px}`,
`<button class="on">模型</button><button>布局1</button><button>布局2</button><button class="add" aria-label="新建布局">${ic('plus')}</button>`);

define('cad-status',`:host{display:flex;align-items:center;height:22px;background:#555;border-left:1px solid #777;border-top:1px solid #6d6d6d;flex:none}
.k{width:19px;height:20px}.c{width:10px;height:20px}.r{width:15px}.l{width:22px;height:20px}.m{width:25px;font-weight:700;color:#fff}
i{width:1px;height:20px;background:#777;margin:0 1px}`,
(()=>{const k=(n,l)=>btn(n,l,'k'),c=btn('caretS','选项','c'),s='<i></i>';
return `<button class="m">模型</button>`+k('sgrid','栅格')+k('ssnap','捕捉')+c+s+k('sortho','正交')+k('spolar','极轴')+c+k('siso','等轴测')+c+s+k('sang','对象捕捉追踪')+k('sosnap','对象捕捉')+c+s+k('sman','注释可见性')+k('sman2','自动缩放')+k('sman2','注释比例')+'<button class="r">1:1</button>'+c+s+k('sgear','工作空间')+c+s+k('splus','注释监视器')+s+k('siso2','隔离对象')+s+k('scirc','硬件加速')+btn('schart','性能','l')+btn('sclean','全屏显示','l')+btn('sburger','自定义','l')})());

define('cad-ime',`:host{display:flex;width:52px;height:19px;background:#fff;align-items:center;justify-content:space-evenly}`,
btn('person','账户')+btn('shirt','皮肤')+btn('apps','工具箱'));

define('cad-watermark',`:host{display:flex;align-items:center;gap:12px;width:180px;height:85px;background:#202e58;color:#c9cddb;padding-left:15px}
strong{display:block;font:700 26px/31px "Liberation Sans","Noto Sans CJK SC",sans-serif}
span{display:block;font:12px/15px "DejaVu Sans",sans-serif}`,
`${ic('brand')}<div><strong>溜溜自学</strong><span>zixue.3D66.COM</span></div>`);

define('cad-app',`:host{display:flex;flex-direction:column;min-height:100vh;position:relative;overflow:hidden}
header{display:grid;grid-template-columns:30px 1fr;grid-template-rows:18px 16px}
.logo{grid-row:1/3;background:linear-gradient(#aaa,#686868);border-right:1px solid #444;align-items:flex-start;justify-content:flex-start;padding:1px 0 0 1px;position:relative}
.logo cad-icon+cad-icon{position:absolute;right:0;top:13px}
footer{display:flex;justify-content:space-between;background:#383838;border-bottom:2px solid #0c1416;height:24px}
cad-watermark{position:absolute;right:55px;bottom:14px}
cad-ime{position:absolute;right:3px;bottom:77px}
.thumb{position:absolute;right:2px;top:12px;width:7px;height:45px;background:#161616;border:1px solid #555;border-bottom-color:#4fa380;border-radius:3px}`,
`<header><button class="logo" aria-label="应用程序菜单">${ic('logo')}${ic('caretS')}</button><cad-titlebar></cad-titlebar><cad-menubar></cad-menubar></header>
<cad-ribbon></cad-ribbon><cad-filetabs></cad-filetabs><cad-canvas></cad-canvas>
<footer><cad-layouts></cad-layouts><cad-status></cad-status></footer>
<cad-watermark></cad-watermark><cad-ime></cad-ime><div class="thumb"></div>`);
</script>
</body>
</html>
